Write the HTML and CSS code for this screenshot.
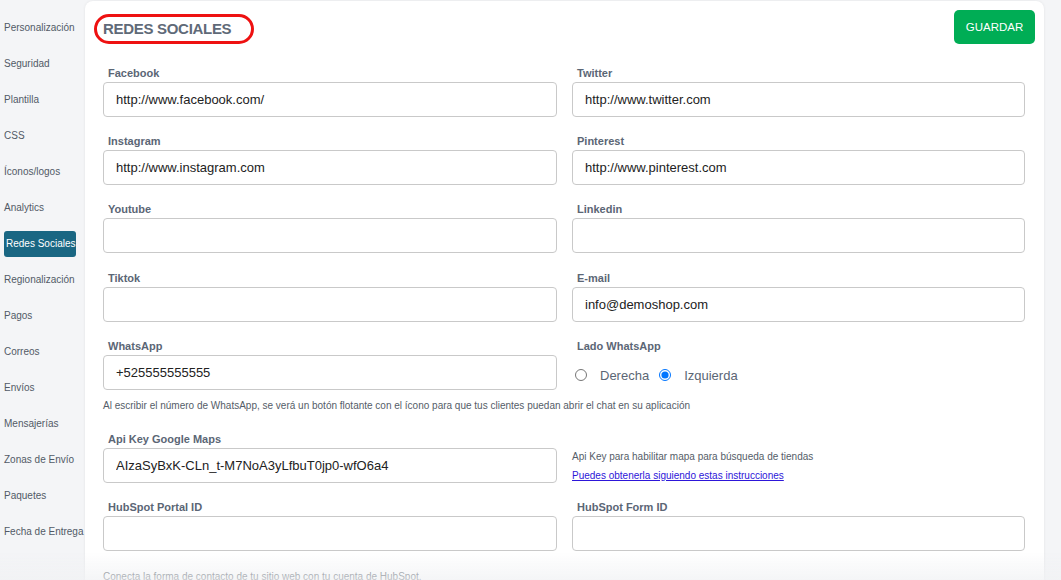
FILE: index.html
```html
<!DOCTYPE html>
<html>
<head>
    <title>Configuración - Redes Sociales</title>
    <link rel="stylesheet" href="styles.css">
</head>
<body>
    <nav class="sidebar">
        <a class="nav-item">Personalización</a>
        <a class="nav-item">Seguridad</a>
        <a class="nav-item">Plantilla</a>
        <a class="nav-item">CSS</a>
        <a class="nav-item">Íconos/logos</a>
        <a class="nav-item">Analytics</a>
        <a class="nav-item active">Redes Sociales</a>
        <a class="nav-item">Regionalización</a>
        <a class="nav-item">Pagos</a>
        <a class="nav-item">Correos</a>
        <a class="nav-item">Envíos</a>
        <a class="nav-item">Mensajerías</a>
        <a class="nav-item">Zonas de Envío</a>
        <a class="nav-item">Paquetes</a>
        <a class="nav-item">Fecha de Entrega</a>
    </nav>

    <main class="card">
        <div class="card-header">
            <h1 class="card-title">Redes Sociales</h1>
            <button class="save-button">GUARDAR</button>
        </div>

        <form class="form-grid">
            <div class="field">
                <label>Facebook</label>
                <input type="text" value="http://www.facebook.com/">
            </div>
            <div class="field">
                <label>Twitter</label>
                <input type="text" value="http://www.twitter.com">
            </div>
            <div class="field">
                <label>Instagram</label>
                <input type="text" value="http://www.instagram.com">
            </div>
            <div class="field">
                <label>Pinterest</label>
                <input type="text" value="http://www.pinterest.com">
            </div>
            <div class="field">
                <label>Youtube</label>
                <input type="text">
            </div>
            <div class="field">
                <label>Linkedin</label>
                <input type="text">
            </div>
            <div class="field">
                <label>Tiktok</label>
                <input type="text">
            </div>
            <div class="field">
                <label>E-mail</label>
                <input type="text" value="info@demoshop.com">
            </div>
            <div class="field field-tight">
                <label>WhatsApp</label>
                <input type="text" value="+525555555555">
            </div>
            <div class="field field-tight">
                <label>Lado WhatsApp</label>
                <div class="radio-group">
                    <label class="radio"><input type="radio" name="lado"> Derecha</label>
                    <label class="radio"><input type="radio" name="lado" checked> Izquierda</label>
                </div>
            </div>
            <p class="help help-wide">Al escribir el número de WhatsApp, se verá un botón flotante con el ícono para que tus clientes puedan abrir el chat en su aplicación</p>

            <div class="field">
                <label>Api Key Google Maps</label>
                <input type="text" value="AIzaSyBxK-CLn_t-M7NoA3yLfbuT0jp0-wfO6a4">
            </div>
            <div class="side-note">
                <p class="help">Api Key para habilitar mapa para búsqueda de tiendas</p>
                <a class="help-link" href="#">Puedes obtenerla siguiendo estas instrucciones</a>
            </div>
            <div class="field field-tight">
                <label>HubSpot Portal ID</label>
                <input type="text">
            </div>
            <div class="field field-tight">
                <label>HubSpot Form ID</label>
                <input type="text">
            </div>
            <p class="help help-wide help-last">Conecta la forma de contacto de tu sitio web con tu cuenta de HubSpot.</p>
        </form>
    </main>
    <div class="bottom-fade"></div>
</body>
</html>
```

FILE: styles.css
```css
body {
    margin: 0;
    display: flex;
    align-items: flex-start;
    background-color: #f4f5f7;
    font-family: "Liberation Sans", Arial, sans-serif;
    color: #222;
    height: 580px;
    overflow: hidden;
}

/* left menu */
.sidebar {
    width: 84px;
    flex-shrink: 0;
    padding-top: 10px;
}
.nav-item {
    display: block;
    padding: 11px 4px;
    font-size: 10px;
    line-height: 14px;
    color: #525a66;
    white-space: nowrap;
    cursor: pointer;
}
.nav-item.active {
    margin: 5px 8px 5px 4px;
    padding: 6px 2px;
    background-color: #1a6783;
    color: #fff;
    border-radius: 3px;
}

/* main card */
.card {
    width: 922px;
    margin: 1px 0 0 1px;
    padding: 9px 19px 0 18px;
    background-color: #fff;
    border-radius: 8px 8px 0 0;
    box-shadow: 0 0 3px rgba(0,0,0,0.08);
    min-height: 600px;
}
.card-header {
    display: flex;
    justify-content: space-between;
    align-items: flex-start;
    height: 34px;
    margin-right: -10px;
}
.card-title {
    position: relative;
    margin: 10px 0 0;
    font-size: 15px;
    line-height: 17px;
    font-weight: bold;
    letter-spacing: -0.3px;
    text-transform: uppercase;
    color: #5f6a78;
}
/* red highlight ring drawn round the title */
.card-title::after {
    content: "";
    position: absolute;
    left: -9px;
    top: -6px;
    width: 154px;
    height: 24px;
    border: 3px solid #ee1111;
    border-radius: 16px;
}
.save-button {
    width: 81px;
    height: 34px;
    background-color: #00ad55;
    color: #fff;
    border: none;
    border-radius: 5px;
    font-family: inherit;
    font-size: 11.5px;
    cursor: pointer;
}

/* form */
.form-grid {
    display: grid;
    grid-template-columns: 454px 453px;
    column-gap: 15px;
    margin-top: 22px;
}
.field {
    margin-bottom: 17.2px;
}
.field-tight {
    margin-bottom: 0;
}
.field > label {
    display: block;
    padding-left: 5px;
    margin-bottom: 2px;
    font-size: 11px;
    line-height: 14px;
    font-weight: bold;
    color: #5b6675;
}
.field input[type="text"] {
    box-sizing: border-box;
    width: 100%;
    height: 35px;
    padding: 0 12px;
    border: 1px solid #c9c9c9;
    border-radius: 4px;
    font-family: inherit;
    font-size: 13px;
    color: #222;
}
.radio-group {
    display: flex;
    align-items: center;
    gap: 10px;
    height: 35px;
    padding: 6px 0 0 3px;
    box-sizing: border-box;
}
.radio {
    display: flex;
    align-items: center;
    gap: 13px;
    font-size: 13px;
    color: #5b6675;
}
.radio input {
    margin: 0;
    width: 12px;
    height: 12px;
}
.help {
    margin: 0;
    font-size: 10px;
    line-height: 12px;
    color: #555d68;
}
.help-wide {
    grid-column: 1 / -1;
    margin: 10px 0 20px;
}
.help-last {
    margin-top: 20px;
}
.side-note {
    padding-top: 19px;
}
.help-link {
    display: block;
    margin-top: 7px;
    font-size: 10px;
    color: #2d16d9;
}

/* soft fade at the bottom edge of the window */
.bottom-fade {
    position: fixed;
    left: 0;
    right: 0;
    bottom: 0;
    height: 28px;
    background: linear-gradient(rgba(240,241,243,0), rgba(240,241,243,0.7));
    pointer-events: none;
}
```
